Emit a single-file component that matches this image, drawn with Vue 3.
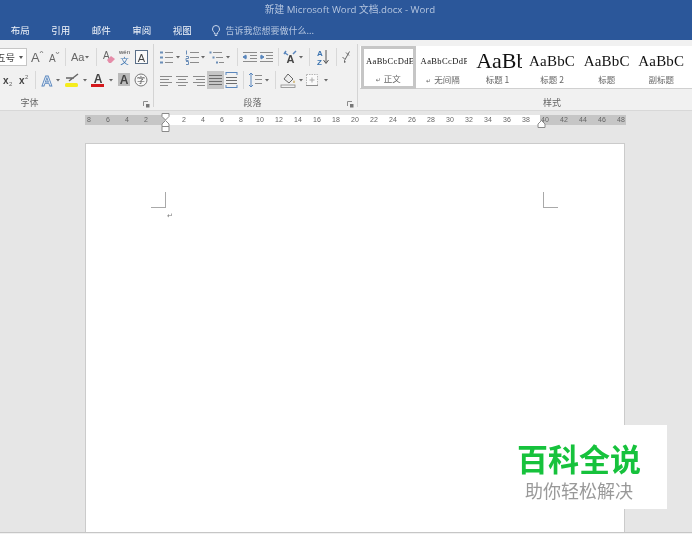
<script setup>
const tabs = ['布局', '引用', '邮件', '审阅', '视图']
const rulerMarks = ['8', '6', '4', '2', '', ...Array.from({ length: 24 }, (_, i) => String((i + 1) * 2))]
const styles = [
  { preview: 'AaBbCcDdE', size: 's', label: '正文', mark: true, active: true },
  { preview: 'AaBbCcDdE', size: 's', label: '无间隔', mark: true },
  { preview: 'AaBb', size: 'l', label: '标题 1' },
  { preview: 'AaBbC', size: 'm', label: '标题 2' },
  { preview: 'AaBbC', size: 'm', label: '标题' },
  { preview: 'AaBbC', size: 'm', label: '副标题' }
]
</script>

<template>
  <div class="app">
    <header class="titlebar">
      <div class="title">新建 Microsoft Word 文档.docx - Word</div>
      <nav class="tabs">
        <span v-for="t in tabs" :key="t" class="tab">{{ t }}</span>
        <svg class="bulb" width="10" height="13" viewBox="0 0 10 13"><path d="M3.4 8.6C2.5 7.6 1.5 6.8 1.5 5A3.5 3.5 0 0 1 8.500 5C8.500 6.800 7.500 7.600 6.600 8.600V10H3.400ZM3.800 11.500H6.200" fill="none" stroke="#c9d6ea" /></svg>
        <span class="tell">告诉我您想要做什么...</span>
      </nav>
    </header>

    <section class="ribbon">
      <div class="group g-font">
        <div class="row">
          <div class="sizebox"><span class="sizetext">五号</span><i class="caret"></i></div>
          <svg width="17" height="20" viewBox="0 0 17 20"><text x="3" y="15" class="glyph" font-size="13">A</text><path d="M12 6l1.500-2 1.500 2" class="ln" /></svg>
          <svg width="16" height="20" viewBox="0 0 16 20"><text x="4" y="15" class="glyph" font-size="10">A</text><path d="M11 5l1.500 2 1.500-2" class="ln" /></svg>
          <i class="sep"></i>
          <svg width="22" height="20" viewBox="0 0 22 20"><text x="1" y="14" class="glyph" font-size="11">Aa</text><path d="M15 9h4l-2 2.500z" class="ar" /></svg>
          <i class="sep"></i>
          <svg width="15" height="20" viewBox="0 0 15 20"><text x="2" y="12" class="glyph" font-size="10">A</text><path d="M6 13l4-4 4 3-4 4h-2z" fill="#e58ca8" /></svg>
          <svg width="17" height="20" viewBox="0 0 17 20"><text x="8.500" y="6.500" class="glyph dk" font-size="6" text-anchor="middle">wén</text><text x="8.500" y="16.500" class="cjk blue" font-size="8.500" text-anchor="middle">文</text></svg>
          <svg width="17" height="20" viewBox="0 0 17 20"><rect x="2.500" y="3.500" width="12" height="13" fill="#fafafa" stroke="#5a6f88" /><text x="8.500" y="14.500" class="glyph dk" font-size="11" text-anchor="middle">A</text></svg>
        </div>
        <div class="row">
          <svg width="16" height="20" viewBox="0 0 16 20"><text x="3" y="14" class="glyph dk b" font-size="10">x</text><text x="9" y="16" class="glyph" font-size="6">2</text></svg>
          <svg width="15" height="20" viewBox="0 0 15 20"><text x="3" y="14" class="glyph dk b" font-size="10">x</text><text x="9" y="9" class="glyph" font-size="6">2</text></svg>
          <i class="sep"></i>
          <svg width="22" height="20" viewBox="0 0 22 20"><text x="7" y="15.500" class="outl" font-size="15" text-anchor="middle">A</text><path d="M16 9h4l-2 2.500z" class="ar" /></svg>
          <svg width="28" height="20" viewBox="0 0 28 20"><path d="M4 8h8M7 11l9-7" fill="none" stroke="#666" stroke-width="1.500" /><rect x="3" y="13" width="13" height="4" rx="1.500" fill="#f5ec1c" /><path d="M21 9h4l-2 2.500z" class="ar" /></svg>
          <svg width="26" height="20" viewBox="0 0 26 20"><text x="8" y="13" class="glyph dk b" font-size="12" text-anchor="middle">A</text><rect x="1" y="14" width="13" height="3" fill="#d4191c" /><path d="M19 9h4l-2 2.500z" class="ar" /></svg>
          <svg width="16" height="20" viewBox="0 0 16 20"><rect x="2" y="3" width="12" height="13" fill="#bbb" /><text x="8" y="14" class="glyph dk b" font-size="12" text-anchor="middle">A</text></svg>
          <svg width="18" height="20" viewBox="0 0 18 20"><circle cx="9" cy="10" r="6" fill="#f8f8f8" stroke="#777" /><text x="9" y="13" class="cjk dk" font-size="8" text-anchor="middle">字</text></svg>
        </div>
        <div class="label">字体</div>
        <svg class="launcher" width="7" height="7" viewBox="0 0 7 7"><path d="M.5 5V.5H5" class="ln" /><path d="M3 3h3.500v3.500H3z" fill="#777" /></svg>
      </div>

      <div class="group g-para">
        <div class="row">
          <svg width="26" height="20" viewBox="0 0 26 20"><path d="M7 5.500h8M7 10.500h8M7 15.500h8" class="ln" /><path d="M2 4.500h3v2H2zM2 9.500h3v2H2zM2 14.500h3v2H2z" fill="#6b8eb8" /><path d="M18 9h4l-2 2.500z" class="ar" /></svg>
          <svg width="24" height="20" viewBox="0 0 24 20"><path d="M6 5.500h9M6 10.500h9M6 15.500h9" class="ln" /><path d="M2.500 3.500v4M2 9.500h2.500v2H2v2h2.500M2 14.500h2.500v3H2" fill="none" stroke="#6b8eb8" /><path d="M17 9h4l-2 2.500z" class="ar" /></svg>
          <svg width="25" height="20" viewBox="0 0 25 20"><path d="M5 5.500h9M8 10.500h7M11 15.500h5" class="ln" /><path d="M1.500 4.500h2v2h-2zM4.500 9.500h2v2h-2zM8 14.500h2v2H8z" fill="#6b8eb8" /><path d="M18 9h4l-2 2.500z" class="ar" /></svg>
          <i class="sep"></i>
          <svg width="17" height="20" viewBox="0 0 17 20"><path d="M1 5.500h14M8 8.500h7M8 11.500h7M1 14.500h14" class="ln" /><path d="M1 10h4M1 10l3-2v4z" fill="#5b87bd" stroke="#5b87bd" /></svg>
          <svg width="15" height="20" viewBox="0 0 15 20"><path d="M1 5.500h13M7 8.500h7M7 11.500h7M1 14.500h13" class="ln" /><path d="M1 10h4M5 10l-3-2v4z" fill="#5b87bd" stroke="#5b87bd" /></svg>
          <i class="sep"></i>
          <svg width="22" height="20" viewBox="0 0 22 20"><path d="M2 6l3 2M13 4l-3 3M3 4l-2 3" fill="none" stroke="#5b87bd" stroke-width="1.500" /><text x="7.500" y="16" class="glyph dk b" font-size="11" text-anchor="middle">A</text><path d="M16 9h4l-2 2.500z" class="ar" /></svg>
          <i class="sep"></i>
          <svg width="18" height="20" viewBox="0 0 18 20"><text x="3" y="9" class="glyph blue b" font-size="8">A</text><text x="3" y="18" class="glyph blue b" font-size="8">Z</text><path d="M12 3v13M9.500 13l2.500 3.500 2.500-3.500" fill="none" stroke="#555" /></svg>
          <i class="sep"></i>
          <svg width="11" height="20" viewBox="0 0 11 20"><path d="M5 5.500l3 3M8.500 4.500l-5 9M1.500 10l2 2" fill="none" stroke="#666" /><path d="M3 13l2 2-2 1z" fill="#666" /></svg>
        </div>
        <div class="row">
          <svg width="16" height="20" viewBox="0 0 16 20"><path d="M2 6.500h12M2 9.500h9M2 12.500h12M2 15.500h8" class="ln" /></svg>
          <svg width="16" height="20" viewBox="0 0 16 20"><path d="M2 6.500h12M4 9.500h8M2 12.500h12M4 15.500h8" class="ln" /></svg>
          <svg width="17" height="20" viewBox="0 0 17 20"><path d="M3 6.500h12M6 9.500h9M3 12.500h12M7 15.500h8" class="ln" /></svg>
          <div class="pressed"><svg width="17" height="18" viewBox="0 0 17 18"><path d="M2 4.500h13M2 7.500h13M2 10.500h13M2 13.500h13" class="ln dkln" /></svg></div>
          <svg width="15" height="20" viewBox="0 0 15 20"><path d="M2 2.500h11M2 17.500h11M2 2v3M13 2v3M2 15v3M13 15v3" fill="none" stroke="#5b87bd" /><path d="M2 7.500h11M2 10.500h11M2 13.500h11" class="ln dkln" /></svg>
          <i class="sep"></i>
          <svg width="23" height="20" viewBox="0 0 23 20"><path d="M3 3v14M1 5l2-2 2 2M1 15l2 2 2-2" fill="none" stroke="#5b87bd" /><path d="M7 5.500h7M7 9.500h7M7 13.500h7" class="ln" /><path d="M17 9h4l-2 2.500z" class="ar" /></svg>
          <i class="sep"></i>
          <svg width="24" height="20" viewBox="0 0 24 20"><path d="M4 9l4-5 5 5-4 4z" fill="#eee" stroke="#666" /><path d="M14 10c1 2 1 3 0 3s-1-1 0-3z" fill="#c9a24a" /><rect x="1" y="15" width="14" height="2.500" fill="#f2f2f2" stroke="#888" stroke-width=".8" /><path d="M19 9h4l-2 2.500z" class="ar" /></svg>
          <svg width="26" height="20" viewBox="0 0 26 20"><rect x="2.500" y="4.500" width="11" height="11" fill="#fafafa" stroke="#b5b5b5" stroke-dasharray="1.500 1" /><path d="M8 7.500v5M5.500 10h5" stroke="#aaa" fill="none" /><path d="M2 15.500h12" class="ln" /><path d="M20 9h4l-2 2.500z" class="ar" /></svg>
        </div>
        <div class="label">段落</div>
        <svg class="launcher" width="7" height="7" viewBox="0 0 7 7"><path d="M.5 5V.5H5" class="ln" /><path d="M3 3h3.500v3.500H3z" fill="#777" /></svg>
      </div>

      <div class="group g-styles">
        <div class="gallery">
          <div v-for="s in styles" :key="s.label" class="style" :class="{ active: s.active }">
            <div class="preview" :class="s.size">{{ s.preview }}</div>
            <div class="stylename"><span v-if="s.mark" class="retmark">↵</span>{{ s.label }}</div>
          </div>
        </div>
        <div class="label">样式</div>
      </div>
    </section>

    <main class="workspace">
      <div class="ruler">
        <div class="ticks"><span v-for="(m, i) in rulerMarks" :key="i" class="tick">{{ m }}</span></div>
        <svg class="marker left" width="9" height="19" viewBox="0 0 9 19"><path d="M1 .5h7v3L4.500 7 1 3.500zM4.500 7.500L8 11v2.500H1V11zM1 13.500h7v5H1z" fill="#fff" stroke="#8a8a8a" /></svg>
        <svg class="marker right" width="9" height="8" viewBox="0 0 9 8"><path d="M4.500 .5L8 4v3.500H1V4z" fill="#fff" stroke="#8a8a8a" /></svg>
      </div>
      <div class="page">
        <i class="crop tl"></i>
        <i class="crop tr"></i>
        <span class="para">↵</span>
      </div>
      <aside class="brand">
        <div class="brand-main">百科全说</div>
        <div class="brand-sub">助你轻松解决</div>
      </aside>
    </main>
    <footer class="status"></footer>
  </div>
</template>

<style scoped>
.app { position: relative; width: 692px; height: 534px; overflow: hidden; display: flex; flex-direction: column; background: #e6e6e6; font-family: "Noto Sans CJK SC", "Open Sans", sans-serif; filter: blur(.35px); }
.titlebar { height: 40px; background: #2b579a; flex: none; }
.title { height: 20px; text-align: center; font: 400 9.700px/19px "Open Sans", "Noto Sans CJK SC", sans-serif; color: #b4c5df; padding-left: 8px; }
.tabs { height: 20px; display: flex; align-items: center; color: #f2f5fa; font-size: 9.500px; }
.tab { width: 40.500px; text-align: center; flex: none; }
.bulb { margin-left: 8px; flex: none; }
.tell { margin-left: 5px; color: #b4c5df; font-size: 9px; }

.ribbon { height: 71px; flex: none; display: flex; background: #f1f1f1; border-bottom: 1px solid #d8d8d8; box-sizing: border-box; padding-top: 4px; }
.group { position: relative; box-sizing: border-box; height: 63px; border-right: 1px solid #d4d4d4; padding-top: 3px; display: flex; flex-direction: column; }
.g-font { width: 154px; }
.g-para { width: 204px; padding-left: 4px; }
.g-styles { flex: 1; border-right: none; padding: 2px 0 0 2px; overflow: hidden; }
.row { display: flex; align-items: center; height: 20px; margin-bottom: 3px; }
.row svg { flex: none; }
.label { position: absolute; left: 0; right: 0; top: 52px; text-align: center; font-size: 9px; line-height: 14px; color: #666; }
.g-font .label { right: 94px; }
.g-para .label { right: 6px; }
.g-styles .label { left: 0; right: auto; width: 388px; }
.launcher { position: absolute; right: 3px; top: 57px; }
.sep { flex: none; width: 1px; height: 18px; background: #d8d8d8; margin: 0 4px; }
.sizebox { width: 27px; height: 18px; box-sizing: border-box; margin-right: 1px; background: #fff; border: 1px solid #c6c6c6; border-left: none; display: flex; align-items: center; overflow: hidden; position: relative; }
.sizetext { position: absolute; left: -4px; font-size: 9.500px; color: #444; white-space: nowrap; }
.caret { position: absolute; right: 3px; top: 7px; width: 0; height: 0; border: 2px solid transparent; border-top: 3px solid #555; }
.pressed { width: 17px; height: 18px; background: #c6c6c6; flex: none; }
.pressed svg { display: block; }

.glyph { font-family: "Liberation Sans", sans-serif; fill: #666; }
.cjk { font-family: "Noto Sans CJK SC", sans-serif; }
.dk { fill: #444; }
.b { font-weight: 700; }
.blue { fill: #3a73b0; }
.outl { font-family: "Liberation Sans", sans-serif; font-weight: 700; fill: #e3ecf7; stroke: #5b87bd; stroke-width: .8; }
.ln { fill: none; stroke: #8c8c8c; stroke-width: 1; }
.dkln { stroke: #6e6e6e; }
.ar { fill: #666; }

.gallery { height: 43px; display: flex; background: #fff; box-sizing: border-box; border-bottom: 1px solid #d0d0d0; }
.style { width: 54.600px; flex: none; box-sizing: border-box; display: flex; flex-direction: column; align-items: center; padding-top: 3px; border: 3px solid transparent; border-top: none; border-bottom: none; overflow: hidden; }
.style.active { border: 3px solid #c6c6c6; padding-top: 0; height: 43px; margin-left: 1px; }
.preview { width: 100%; box-sizing: border-box; height: 24px; line-height: 24px; font-family: "Liberation Serif", serif; white-space: nowrap; color: #111; overflow: hidden; text-align: center; }
.preview.s { font-size: 8.500px; letter-spacing: .4px; text-align: left; padding-left: 2px; }
.preview.m { font-size: 15px; letter-spacing: .2px; }
.preview.l { font-size: 22px; text-align: left; line-height: 23px; padding-left: 3px; }
.stylename { font-size: 8.500px; line-height: 12px; color: #666; white-space: nowrap; }
.retmark { font-family: "DejaVu Sans", sans-serif; font-size: 6px; margin-right: 3px; }

.workspace { flex: 1; position: relative; min-height: 0; padding-top: 4px; }
.ruler { position: relative; width: 541px; height: 10px; margin-left: 85px; background: linear-gradient(90deg, #c6c6c6 80px, #fff 80px, #fff 455px, #c6c6c6 455px); }
.ticks { display: flex; margin-left: -5.500px; height: 10px; }
.tick { width: 19px; flex: none; text-align: center; font: 7px/10px "Liberation Sans", sans-serif; color: #666; }
.marker { position: absolute; }
.marker.left { left: 76px; top: -2px; }
.marker.right { left: 452px; top: 5px; }
.page { position: relative; box-sizing: border-box; width: 540px; height: 389px; margin: 18px 0 0 85px; background: #fff; border: 1px solid #cbcbcb; border-bottom: none; }
.crop { position: absolute; top: 48px; width: 15px; height: 16px; box-sizing: border-box; border-bottom: 1px solid #a9a9a9; }
.crop.tl { left: 65px; border-right: 1px solid #a9a9a9; }
.crop.tr { left: 457px; border-left: 1px solid #a9a9a9; }
.para { position: absolute; left: 81px; top: 67px; font: 7px/10px "DejaVu Sans", sans-serif; color: #777; }
.brand { position: absolute; left: 510px; top: 314px; width: 157px; height: 84px; background: #fff; text-align: center; box-sizing: border-box; padding: 15px 19px 0 0; }
.brand-main { font-size: 31px; line-height: 36px; font-weight: 700; color: #16c23c; }
.brand-sub { font-size: 18px; line-height: 22px; margin-top: 3px; color: #999; }
.status { height: 2px; flex: none; background: #f1f1f1; border-top: 1px solid #c6c6c6; box-sizing: border-box; }
</style>
